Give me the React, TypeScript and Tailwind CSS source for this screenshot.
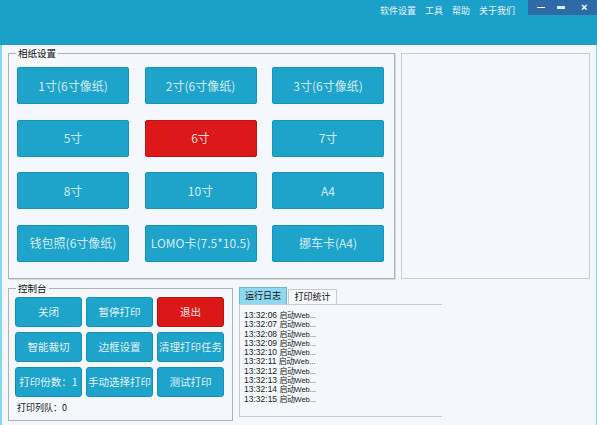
import React from 'react';

const cjk = "font-['Noto_Sans_CJK_SC','Liberation_Sans',sans-serif]";

const paperSizes = [
  { label: '1寸(6寸像纸)' },
  { label: '2寸(6寸像纸)' },
  { label: '3寸(6寸像纸)' },
  { label: '5寸' },
  { label: '6寸', active: true },
  { label: '7寸' },
  { label: '8寸' },
  { label: '10寸' },
  { label: 'A4' },
  { label: '钱包照(6寸像纸)' },
  { label: 'LOMO卡(7.5*10.5)' },
  { label: '挪车卡(A4)' },
];

const controls = [
  { label: '关闭' },
  { label: '暂停打印' },
  { label: '退出', danger: true },
  { label: '智能裁切' },
  { label: '边框设置' },
  { label: '清理打印任务' },
  { label: '打印份数：1' },
  { label: '手动选择打印' },
  { label: '测试打印' },
];

const logs = ['06', '07', '08', '09', '10', '11', '12', '13', '14', '15'];

const App: React.FC = () => {
  return (
    <div className={`w-[597px] h-[425px] flex flex-col bg-[#f4f8fc] overflow-hidden ${cjk}`}>
      {/* Title bar */}
      <div className="h-[45px] shrink-0 bg-[#1ba1c9] flex justify-end items-start">
        <div className="flex gap-[9px] pt-[5px] pr-[13px] text-[9px] leading-[12px] text-[#e6f4f9]">
          <span>软件设置</span>
          <span>工具</span>
          <span>帮助</span>
          <span>关于我们</span>
        </div>
        <div className="w-[69px] h-[15px] bg-[#2e6aa6] flex items-center text-white">
          <span className="ml-[9px] w-[8px] h-[1px] bg-white" />
          <span className="ml-[12px] w-[8px] h-[3px] bg-[#d8eef8]" />
          <span className="ml-[16px] text-[11px] leading-none font-['Liberation_Sans',sans-serif] font-bold">×</span>
        </div>
      </div>

      {/* Main area */}
      <div className="flex-1 flex flex-col border-l-2 border-r border-[#86d6ee] pt-[8px] pl-[6px] pr-[6px]">
        <div className="flex gap-[6px]">
          {/* 相纸设置 */}
          <div className="relative w-[388px] h-[226px] border border-[#aeb2b6] shadow-[1px_1px_0_#d7dadd] pt-[13px] pl-[8px]">
            <span className="absolute left-[7px] top-[-7px] px-[2px] bg-[#f4f8fc] text-[9.5px] leading-[12px] text-[#111]">相纸设置</span>
            <div className="grid grid-cols-[112px_112px_112px] gap-x-[15.5px] gap-y-[15.5px]">
              {paperSizes.map((p) => (
                <button
                  key={p.label}
                  className={`h-[37px] rounded-[2px] border text-[12px] flex items-center justify-center whitespace-nowrap ${
                    p.active ? 'bg-[#dc1818] border-[#c21313] text-[#f3dada]' : 'bg-[#1ea3ca] border-[#1893b8] text-[#d3ecf4]'
                  }`}
                >
                  {p.label}
                </button>
              ))}
            </div>
          </div>
          {/* preview panel */}
          <div className="w-[190px] h-[226px] border border-[#c9cdd2]" />
        </div>

        <div className="flex gap-[6px] mt-[9px]">
          {/* 控制台 */}
          <div className="relative w-[225px] h-[133px] border border-[#aeb2b6] pt-[8px] pl-[6px]">
            <span className="absolute left-[7px] top-[-7px] px-[2px] bg-[#f4f8fc] text-[9.5px] leading-[12px] text-[#111]">控制台</span>
            <div className="grid grid-cols-[67px_67px_67px] gap-x-[4px] gap-y-[5px]">
              {controls.map((c) => (
                <button
                  key={c.label}
                  className={`h-[30px] rounded-[3px] border text-[10.5px] flex items-center justify-center whitespace-nowrap ${
                    c.danger ? 'bg-[#dc1717] border-[#b91111] text-[#f8e4e4]' : 'bg-[#1ea3ca] border-[#1890b4] text-[#e2f3f8]'
                  }`}
                >
                  {c.label}
                </button>
              ))}
            </div>
            <div className="mt-[5px] ml-[2px] text-[9px] leading-[12px] text-[#111]">打印列队：0</div>
          </div>

          {/* 日志 tabs */}
          <div className="w-[203px] flex flex-col -mt-[1px]">
            <div className="flex items-end h-[17px] gap-[1px]">
              <div className="h-[17px] w-[48px] bg-[#8fd9f0] border border-[#6fb7cc] border-b-0 flex items-center justify-center text-[9px] text-[#111]">运行日志</div>
              <div className="h-[15px] w-[49px] bg-[#f6f8fa] border border-[#c8cbd0] border-b-0 flex items-center justify-center text-[9px] text-[#111]">打印统计</div>
            </div>
            <div className="h-[113px] border border-[#c8cbd0] border-r-0 pt-[5px] pl-[4px] text-[8px] text-[#1a1a1a]">
              {logs.map((s) => (
                <div key={s} className="h-[9.3px] leading-[9.3px] whitespace-nowrap overflow-visible">
                  <span className="font-['Liberation_Sans',sans-serif] text-[8.5px]">13:32:{s} </span>
                  <span className="tracking-[-0.5px]">启动</span>
                  <span className="font-['Liberation_Sans',sans-serif] text-[7.5px]">Web...</span>
                </div>
              ))}
            </div>
          </div>
        </div>
      </div>
    </div>
  );
};

export default App;
